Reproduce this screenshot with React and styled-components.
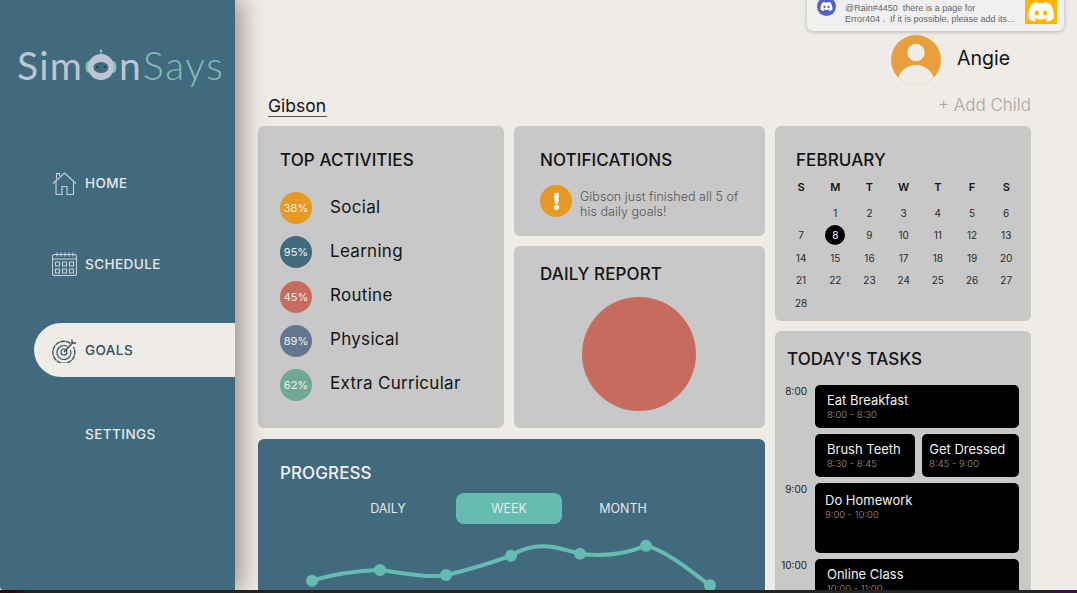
import React from 'react';
import styled, { createGlobalStyle } from 'styled-components';
import { FaDiscord, FaExclamation } from 'react-icons/fa';

const GlobalStyle = createGlobalStyle`
  html, body {
    margin: 0;
    padding: 0;
    height: 593px;
    overflow: hidden;
    background: #efebe7;
    font-family: Inter, 'Open Sans', sans-serif;
    color: #141414;
  }
  * {
    box-sizing: border-box;
  }
`;

const Page = styled.div`
  width: 1077px;
  height: 593px;
  display: flex;
  flex-direction: column;
  overflow: hidden;
`;
const Screen = styled.div`
  flex: 1;
  min-height: 0;
  display: flex;
  position: relative;
  overflow: hidden;
`;
const BottomEdge = styled.div`
  height: 3px;
  background: linear-gradient(90deg, #30070f 0, #30070f 12px, #242424 30px, #242424 1050px, #3a1240 1060px);
`;

const Sidebar = styled.aside`
  width: 235px;
  flex-shrink: 0;
  background: #426a7e;
  box-shadow: 6px 0 24px rgba(40, 30, 25, 0.45);
  border-bottom-left-radius: 4px;
  position: relative;
  z-index: 1;
`;
const LogoArea = styled.div`
  height: 156px;
  padding: 42px 0 0 17px;
`;
const Logo = styled.div`
  display: flex;
  align-items: center;
  height: 46px;
  font-family: Lato, sans-serif;
  font-size: 39px;
  font-weight: 400;
  letter-spacing: 1.2px;
  line-height: 46px;
  color: #bcc6d2;
`;
const LogoAccent = styled.span`
  color: #7dbfb2;
  font-weight: 300;
  letter-spacing: 1.6px;
  margin-left: 1px;
`;
const RobotO = styled.svg`
  width: 32px;
  height: 32px;
  margin: 0 2px 0 2px;
`;
const Nav = styled.nav`
  display: flex;
  flex-direction: column;
`;
const NavItem = styled.div`
  height: 54px;
  margin-top: ${p => p.$gap || 0}px;
  margin-left: 34px;
  padding-left: 18px;
  display: flex;
  align-items: center;
  gap: 8px;
  font-family: Inter, sans-serif;
  font-size: 13.5px;
  font-weight: 500;
  letter-spacing: 0.45px;
  color: ${p => (p.$active ? '#2f4f60' : '#e8e8e6')};
  background: ${p => (p.$active ? '#efebe7' : 'transparent')};
  border-radius: 27px 0 0 27px;
`;
const NavIcon = styled.svg`
  width: 25px;
  height: 25px;
  flex-shrink: 0;
  fill: none;
  stroke: ${p => (p.$active ? '#2f4f60' : '#c9d0d6')};
  stroke-width: 1.1;
`;
const NavLabelOnly = styled.span`
  margin-left: 33px;
`;

const Main = styled.main`
  flex: 1;
  min-width: 0;
  padding: 0 46px 0 23px;
`;
const UserRow = styled.div`
  height: 90px;
  padding: 35px 21px 0 0;
  display: flex;
  justify-content: flex-end;
  gap: 16px;
`;
const Avatar = styled.svg`
  width: 50px;
  height: 50px;
`;
const UserName = styled.div`
  font-size: 19.5px;
  font-weight: 400;
  line-height: 47px;
`;
const ChildRow = styled.div`
  height: 36px;
  padding-left: 10px;
  display: flex;
  justify-content: space-between;
  align-items: flex-start;
`;
const ChildTab = styled.div`
  font-size: 17.5px;
  font-weight: 400;
  line-height: 23px;
  height: 27px;
  padding-top: 4px;
  border-bottom: 1px solid #555;
  width: 59px;
  white-space: nowrap;
`;
const AddChild = styled.div`
  font-size: 17px;
  font-weight: 300;
  line-height: 31px;
  color: #a8a5a2;
  white-space: nowrap;
`;

const Board = styled.div`
  display: grid;
  grid-template-columns: 507px 256px;
  gap: 10px;
  align-items: start;
`;
const LeftArea = styled.div`
  display: grid;
  grid-template-columns: 246px 251px;
  column-gap: 10px;
  row-gap: 11px;
`;
const MiddleColumn = styled.div`
  display: flex;
  flex-direction: column;
  gap: 10px;
`;
const RightColumn = styled.div`
  display: flex;
  flex-direction: column;
  gap: 10px;
`;
const Card = styled.section`
  background: #c8c8c8;
  border-radius: 6px;
  height: ${p => p.$height}px;
  padding: ${p => p.$top || 22}px 22px 0;
`;
const CardTitle = styled.h2`
  margin: 0;
  font-size: 17px;
  font-weight: 450;
  letter-spacing: 0.1px;
  line-height: 24px;
  white-space: nowrap;
`;

const ActivityList = styled.ul`
  list-style: none;
  margin: 20px 0 0;
  padding: 0;
  display: flex;
  flex-direction: column;
  gap: 12.3px;
`;
const ActivityRow = styled.li`
  display: flex;
  align-items: center;
  gap: 18px;
  font-size: 17px;
  font-weight: 400;
  letter-spacing: 0.3px;
  white-space: nowrap;
`;
const ActivityName = styled.span`
  padding-bottom: ${p => 2 + p.$index * 0.5}px;
`;
const Percent = styled.span`
  width: 32px;
  height: 32px;
  border-radius: 50%;
  background: ${p => p.$color};
  color: #f4f0ea;
  font-size: 11px;
  letter-spacing: 0;
  display: flex;
  align-items: center;
  justify-content: center;
`;

const NoticeCard = styled(Card)`
  padding-left: 26px;
`;
const Notice = styled.div`
  display: flex;
  gap: 8px;
  margin-top: 13px;
`;
const NoticeIcon = styled.span`
  width: 32px;
  height: 32px;
  flex-shrink: 0;
  border-radius: 50%;
  background: #e69823;
  color: #fff;
  font-size: 17px;
  display: flex;
  align-items: center;
  justify-content: center;
`;
const NoticeText = styled.p`
  margin: 4px 0 0;
  font-size: 12.5px;
  font-weight: 300;
  letter-spacing: 0.05px;
  line-height: 15px;
  color: #555;
  white-space: nowrap;
`;
const ReportCircle = styled.div`
  width: 114px;
  height: 114px;
  border-radius: 50%;
  background: #c66b5e;
  margin: 11px 0 0 42px;
`;

const CalendarCard = styled(Card)`
  padding: 22px 9px 0;
`;
const CalendarTitle = styled(CardTitle)`
  padding-left: 12px;
`;
const CalendarGrid = styled.div`
  display: grid;
  grid-template-columns: repeat(7, 34.2px);
  grid-auto-rows: 22.5px;
  margin-top: 7px;
  font-size: 10px;
  justify-items: center;
  align-items: center;
`;
const WeekDay = styled.div`
  font-size: 11px;
  font-weight: 600;
  margin-bottom: 3px;
  height: 26px;
  line-height: 22px;
`;
const Day = styled.div`
  width: 20px;
  height: 20px;
  border-radius: 50%;
  display: flex;
  align-items: center;
  justify-content: center;
  font-weight: 400;
  color: ${p => (p.$today ? '#fff' : '#2a2a2a')};
  background: ${p => (p.$today ? '#000' : 'transparent')};
`;

const TasksCard = styled(Card)`
  padding: 16px 12px 0;
  height: 280px;
`;
const TaskGrid = styled.div`
  margin-top: 14px;
  display: grid;
  grid-template-columns: 28px 1fr;
  row-gap: 6px;
`;
const TaskTime = styled.div`
  display: flex;
  justify-content: flex-end;
  padding-right: 8px;
  font-size: 10px;
  font-weight: 400;
  line-height: 12px;
  color: #222;
`;
const TaskPair = styled.div`
  display: flex;
  gap: 7px;
`;
const Task = styled.div`
  flex: ${p => p.$flex || 1};
  height: ${p => p.$height || 43}px;
  background: #000;
  color: #f0f0f0;
  border-radius: 5px;
  padding: ${p => p.$top || 8}px 12px 0 ${p => p.$left || 12}px;
  font-size: 13px;
  font-weight: 400;
  line-height: 15px;
  white-space: nowrap;
`;
const TaskHours = styled.div`
  font-size: 9.5px;
  font-weight: 300;
  line-height: 13px;
  color: #999;
`;

const ProgressCard = styled.section`
  grid-column: 1 / span 2;
  height: 170px;
  background: #426a7e;
  border-radius: 6px;
  padding: 22px 22px 0;
  color: #f0f0ee;
`;
const Tabs = styled.div`
  display: flex;
  gap: 20px;
  margin: 8px 0 0 60px;
  height: 31px;
`;
const Tab = styled.div`
  width: ${p => p.$width}px;
  height: 31px;
  line-height: 32px;
  text-align: center;
  font-size: 12.5px;
  color: #e6e8e8;
  border-radius: 8px;
  background: ${p => (p.$active ? '#65bcb0' : 'transparent')};
`;
const Chart = styled.svg`
  display: block;
  width: 507px;
  height: 90px;
  margin: 0 0 0 -22px;
  overflow: visible;
`;

const Toast = styled.div`
  position: absolute;
  top: -10px;
  left: 807px;
  width: 257px;
  height: 41px;
  background: #f0f0f0;
  border-radius: 6px;
  box-shadow: 0 1px 4px rgba(0, 0, 0, 0.22);
  display: flex;
  padding-left: 10px;
  z-index: 2;
`;
const ToastBadge = styled.span`
  width: 19px;
  height: 19px;
  flex-shrink: 0;
  margin-top: 7px;
  border-radius: 50%;
  background: #5560c0;
  color: #fff;
  font-size: 13px;
  display: flex;
  align-items: center;
  justify-content: center;
`;
const ToastText = styled.div`
  margin: 13px 0 0 9px;
  width: 180px;
  flex-shrink: 0;
  font-family: 'Liberation Sans', sans-serif;
  font-size: 9px;
  line-height: 11px;
  color: #666;
  white-space: pre;
`;
const ToastLogo = styled.span`
  width: 32px;
  height: 24px;
  flex-shrink: 0;
  margin-top: 10px;
  background: #ffb400;
  color: #fff;
  font-size: 28px;
  display: flex;
  align-items: center;
  justify-content: center;
`;

const activities = [
  { pct: '38%', name: 'Social', color: '#e69823' },
  { pct: '95%', name: 'Learning', color: '#426a7e' },
  { pct: '45%', name: 'Routine', color: '#c66b5e' },
  { pct: '89%', name: 'Physical', color: '#627591' },
  { pct: '62%', name: 'Extra Curricular', color: '#6fa995' },
];

const weekDays = ['S', 'M', 'T', 'W', 'T', 'F', 'S'];
const days = Array.from({ length: 28 }, (_, i) => i + 1);

// chart dots, in the card's own coordinates
const points = [[54, 56.7], [122, 46], [188, 51], [253, 31.7], [322, 29.7], [388, 21.7], [452, 61.3]];

const HomeIcon = () => (
  <NavIcon viewBox="0 0 25 25">
    <path d="M1 12.5 L12.5 2 L24 12.5" />
    <path d="M4 10 V23.5 H10 V15.5 H15 V23.5 H21.5 V10" />
    <path d="M4.5 8 V2.5 H7.5 V5" />
  </NavIcon>
);

const CalendarIcon = () => (
  <NavIcon viewBox="0 0 25 25">
    <rect x="0.5" y="2.5" width="24" height="21" rx="2" />
    <path d="M0.5 7 H24.5 M5 0.5 V4.5 M9 0.5 V4.5 M13 0.5 V4.5 M17 0.5 V4.5 M21 0.5 V4.5" />
    <path d="M3.5 10 h4 v4 h-4 z M10.5 10 h4 v4 h-4 z M17.5 10 h4 v4 h-4 z M3.5 17 h4 v4 h-4 z M10.5 17 h4 v4 h-4 z M17.5 17 h4 v4 h-4 z" />
  </NavIcon>
);

const TargetIcon = () => (
  <NavIcon $active viewBox="0 0 25 25">
    <path d="M18.5 5.5 A11 11 0 1 0 21.5 9" strokeWidth="1.3" strokeDasharray="5 0.6" />
    <path d="M15.5 8.5 A7 7 0 1 0 18.5 12" />
    <circle cx="12" cy="14" r="3" />
    <path d="M12 14 L21 4.5 M20 1.5 V5 H24" strokeWidth="1.4" />
  </NavIcon>
);

export default function App() {
  return (
    <Page>
      <GlobalStyle />
      <Screen>
        <Sidebar>
          <LogoArea>
            <Logo>
              Sim
              <RobotO viewBox="0 0 32 32">
                <path d="M16 1 V7" stroke="#8fbdb5" strokeWidth="1.2" />
                <circle cx="16" cy="1.8" r="1.3" fill="#8fbdb5" />
                <ellipse cx="3.5" cy="18" rx="3" ry="6" fill="#7dbfb2" />
                <ellipse cx="28.5" cy="18" rx="3" ry="6" fill="#7dbfb2" />
                <circle cx="16" cy="18" r="13" fill="#bcc6d2" />
                <ellipse cx="16" cy="18.5" rx="7.5" ry="5.5" fill="#426a7e" />
                <circle cx="12" cy="18" r="1" fill="#1f2d36" />
                <circle cx="20" cy="18" r="1" fill="#1f2d36" />
              </RobotO>
              n<LogoAccent>Says</LogoAccent>
            </Logo>
          </LogoArea>
          <Nav>
            <NavItem>
              <HomeIcon />
              HOME
            </NavItem>
            <NavItem $gap={27}>
              <CalendarIcon />
              SCHEDULE
            </NavItem>
            <NavItem $gap={32} $active>
              <TargetIcon />
              GOALS
            </NavItem>
            <NavItem $gap={30}>
              <NavLabelOnly>SETTINGS</NavLabelOnly>
            </NavItem>
          </Nav>
        </Sidebar>

        <Main>
          <UserRow>
            <Avatar viewBox="0 0 50 50">
              <defs>
                <clipPath id="avatar-clip">
                  <circle cx="25" cy="25" r="25" />
                </clipPath>
              </defs>
              <circle cx="25" cy="25" r="25" fill="#e89f3c" />
              <circle cx="25" cy="17.5" r="8.7" fill="#efebe7" />
              <ellipse cx="25" cy="49" rx="19" ry="19" fill="#efebe7" clipPath="url(#avatar-clip)" />
            </Avatar>
            <UserName>Angie</UserName>
          </UserRow>
          <ChildRow>
            <ChildTab>Gibson</ChildTab>
            <AddChild>+ Add Child</AddChild>
          </ChildRow>

          <Board>
            <LeftArea>
              <Card $height={302}>
                <CardTitle>TOP ACTIVITIES</CardTitle>
                <ActivityList>
                  {activities.map((a, i) => (
                    <ActivityRow key={a.name}>
                      <Percent $color={a.color}>{a.pct}</Percent>
                      <ActivityName $index={i}>{a.name}</ActivityName>
                    </ActivityRow>
                  ))}
                </ActivityList>
              </Card>
              <MiddleColumn>
                <NoticeCard $height={110}>
                  <CardTitle>NOTIFICATIONS</CardTitle>
                  <Notice>
                    <NoticeIcon>
                      <FaExclamation />
                    </NoticeIcon>
                    <NoticeText>
                      Gibson just finished all 5 of
                      <br />
                      his daily goals!
                    </NoticeText>
                  </Notice>
                </NoticeCard>
                <NoticeCard $height={182} $top={16}>
                  <CardTitle>DAILY REPORT</CardTitle>
                  <ReportCircle />
                </NoticeCard>
              </MiddleColumn>
              <ProgressCard>
                <CardTitle>PROGRESS</CardTitle>
                <Tabs>
                  <Tab $width={96}>DAILY</Tab>
                  <Tab $width={106} $active>
                    WEEK
                  </Tab>
                  <Tab $width={82}>MONTH</Tab>
                </Tabs>
                <Chart viewBox="0 0 507 90">
                  <path
                    d="M54 56.7 C 75 50, 100 47, 122 46 C 145 49, 170 54, 188 51 C 210 46, 235 38, 253 31.7 C 265 24, 280 21, 295 23 C 305 25, 315 28, 322 29.7 C 345 33, 365 31, 388 21.7 C 410 28, 430 45, 452 61.3"
                    fill="none"
                    stroke="#65bcb0"
                    strokeWidth="4"
                  />
                  {points.map(([x, y]) => (
                    <circle key={x} cx={x} cy={y} r="6" fill="#65bcb0" />
                  ))}
                </Chart>
              </ProgressCard>
            </LeftArea>

            <RightColumn>
              <CalendarCard $height={195}>
                <CalendarTitle>FEBRUARY</CalendarTitle>
                <CalendarGrid>
                  {weekDays.map((d, i) => (
                    <WeekDay key={i}>{d}</WeekDay>
                  ))}
                  <span />
                  {days.map(d => (
                    <Day key={d} $today={d === 8}>
                      {d}
                    </Day>
                  ))}
                </CalendarGrid>
              </CalendarCard>
              <TasksCard>
                <CardTitle>TODAY'S TASKS</CardTitle>
                <TaskGrid>
                  <TaskTime>8:00</TaskTime>
                  <Task>
                    Eat Breakfast
                    <TaskHours>8:00 - 8:30</TaskHours>
                  </Task>
                  <span />
                  <TaskPair>
                    <Task $flex={97}>
                      Brush Teeth
                      <TaskHours>8:30 - 8:45</TaskHours>
                    </Task>
                    <Task $flex={99} $left={7}>
                      Get Dressed
                      <TaskHours>8:45 - 9:00</TaskHours>
                    </Task>
                  </TaskPair>
                  <TaskTime>9:00</TaskTime>
                  <Task $height={70} $left={10} $top={10}>
                    Do Homework
                    <TaskHours>9:00 - 10:00</TaskHours>
                  </Task>
                  <TaskTime>10:00</TaskTime>
                  <Task $height={70}>
                    Online Class
                    <TaskHours>10:00 - 11:00</TaskHours>
                  </Task>
                </TaskGrid>
              </TasksCard>
            </RightColumn>
          </Board>
        </Main>

        <Toast>
          <ToastBadge>
            <FaDiscord />
          </ToastBadge>
          <ToastText>
            {'@Rain#4450  there is a page for\nError404 .  If it is possible, please add its...'}
          </ToastText>
          <ToastLogo>
            <FaDiscord />
          </ToastLogo>
        </Toast>
      </Screen>
      <BottomEdge />
    </Page>
  );
}
